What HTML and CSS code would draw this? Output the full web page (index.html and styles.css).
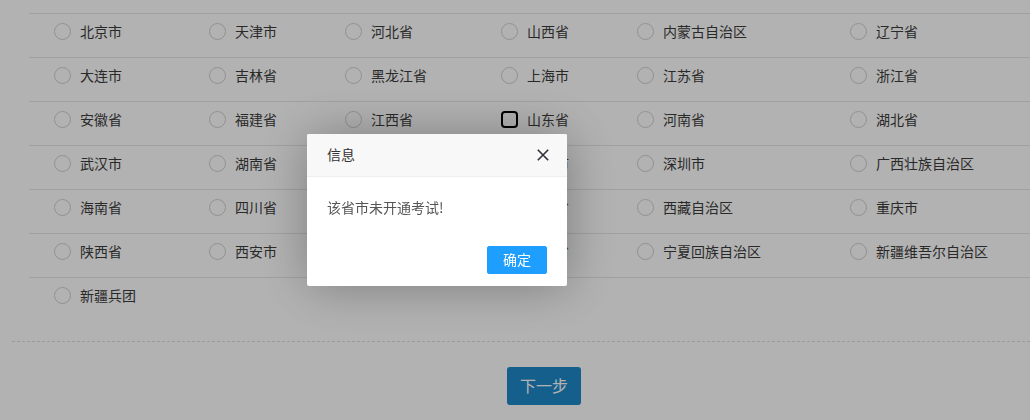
FILE: index.html
```html
<!DOCTYPE html>
<html lang="zh-CN">
<head>
<meta charset="utf-8">
<title>选择省市</title>
<link rel="stylesheet" href="styles.css">
</head>
<body>
<div class="page">
  <div class="grid">
    <div class="row">
      <label class="cell"><span class="radio"></span>北京市</label>
      <label class="cell"><span class="radio"></span>天津市</label>
      <label class="cell"><span class="radio"></span>河北省</label>
      <label class="cell"><span class="radio"></span>山西省</label>
      <label class="cell"><span class="radio"></span>内蒙古自治区</label>
      <label class="cell"><span class="radio"></span>辽宁省</label>
    </div>
    <div class="row">
      <label class="cell"><span class="radio"></span>大连市</label>
      <label class="cell"><span class="radio"></span>吉林省</label>
      <label class="cell"><span class="radio"></span>黑龙江省</label>
      <label class="cell"><span class="radio"></span>上海市</label>
      <label class="cell"><span class="radio"></span>江苏省</label>
      <label class="cell"><span class="radio"></span>浙江省</label>
    </div>
    <div class="row">
      <label class="cell"><span class="radio"></span>安徽省</label>
      <label class="cell"><span class="radio"></span>福建省</label>
      <label class="cell"><span class="radio"></span>江西省</label>
      <label class="cell"><span class="radio focused"></span>山东省</label>
      <label class="cell"><span class="radio"></span>河南省</label>
      <label class="cell"><span class="radio"></span>湖北省</label>
    </div>
    <div class="row">
      <label class="cell"><span class="radio"></span>武汉市</label>
      <label class="cell"><span class="radio"></span>湖南省</label>
      <label class="cell"><span class="radio"></span>广东省</label>
      <label class="cell"><span class="radio"></span>广州市</label>
      <label class="cell"><span class="radio"></span>深圳市</label>
      <label class="cell"><span class="radio"></span>广西壮族自治区</label>
    </div>
    <div class="row">
      <label class="cell"><span class="radio"></span>海南省</label>
      <label class="cell"><span class="radio"></span>四川省</label>
      <label class="cell"><span class="radio"></span></label>
      <label class="cell"><span class="radio"></span>云南省</label>
      <label class="cell"><span class="radio"></span>西藏自治区</label>
      <label class="cell"><span class="radio"></span>重庆市</label>
    </div>
    <div class="row">
      <label class="cell"><span class="radio"></span>陕西省</label>
      <label class="cell"><span class="radio"></span>西安市</label>
      <label class="cell"><span class="radio"></span>甘肃省</label>
      <label class="cell"><span class="radio"></span>青海省</label>
      <label class="cell"><span class="radio"></span>宁夏回族自治区</label>
      <label class="cell"><span class="radio"></span>新疆维吾尔自治区</label>
    </div>
    <div class="row">
      <label class="cell"><span class="radio"></span>新疆兵团</label>
    </div>
  </div>
  <div class="divider"></div>
  <div class="footer">
    <button class="next-btn" type="button">下一步</button>
  </div>
</div>

<div class="shade"></div>

<div class="dialog">
  <div class="dialog-title">
    <span>信息</span>
    <svg class="dialog-close" width="12" height="12" viewBox="0 0 12 12">
      <path d="M0.8 0.8 L11.2 11.2 M11.2 0.8 L0.8 11.2" stroke="#2f2f3a" stroke-width="1.6" fill="none"/>
    </svg>
  </div>
  <div class="dialog-content">该省市未开通考试!</div>
  <div class="dialog-btns">
    <a class="dialog-btn">确定</a>
  </div>
</div>
</body>
</html>
```
FILE: styles.css
```css
html, body {
  margin: 0;
  padding: 0;
  background: #fff;
}

body {
  font-family: "Microsoft YaHei", "Noto Sans CJK SC", "Noto Sans", sans-serif;
  font-size: 14px;
  color: #444;
  overflow: hidden;
}

.page {
  padding: 13px 0 0 12px;
}

.grid {
  margin-left: 17px;
  margin-bottom: 20px;
}

.row {
  display: grid;
  grid-template-columns: 155px 136px 156px 136px 213px 1fr;
  border-top: 1px solid #e6e6e6;
  height: 43px;
  box-sizing: content-box;
}

.cell {
  display: flex;
  align-items: center;
  height: 18px;
  margin-top: 8px;
  padding-left: 25px;
  line-height: 16px;
  padding-bottom: 2px;
  white-space: nowrap;
  color: #3c3c3c;
}

.radio {
  width: 15px;
  height: 15px;
  border: 1px solid #cfcfcf;
  border-radius: 50%;
  margin-right: 9px;
  flex: none;
  box-sizing: content-box;
  background: #fff;
  align-self: flex-start;
  margin-top: 1px;
}

.radio.focused {
  width: 13px;
  height: 13px;
  border: 2px solid #000;
  border-radius: 4px;
  background: #fff;
}

.divider {
  border-top: 1px dashed #dcdcdc;
}

.footer {
  padding: 25px 0 0 495px;
}

.next-btn {
  width: 74px;
  height: 38px;
  border: none;
  border-radius: 3px;
  background: #1f88cb;
  color: #fff;
  font-family: inherit;
  font-size: 16px;
  padding: 0 0 2px;
  line-height: 20px;
}

.shade {
  position: fixed;
  inset: 0;
  background: rgba(0, 0, 0, 0.3);
}

.dialog {
  position: fixed;
  left: 307px;
  top: 134px;
  width: 260px;
  background: #fff;
  border-radius: 2px;
  box-shadow: 1px 1px 50px rgba(0, 0, 0, 0.3);
}

.dialog-title {
  height: 40px;
  line-height: 40px;
  padding: 0 18px 2px 20px;
  background: #f8f8f8;
  border-bottom: 1px solid #eee;
  border-radius: 2px 2px 0 0;
  color: #333;
  font-size: 14px;
  display: flex;
  justify-content: space-between;
  align-items: center;
}

.dialog-close {
  display: block;
  margin-top: 1px;
}

.dialog-content {
  padding: 18px 20px 22px;
  line-height: 24px;
  font-size: 14px;
  color: #555;
}

.dialog-btns {
  text-align: right;
  padding: 0 15px 12px;
}

.dialog-btn {
  display: inline-block;
  height: 28px;
  line-height: 24px;
  margin: 5px 5px 0;
  padding: 0 15px 2px;
  border: 1px solid #1e9fff;
  background: #1e9fff;
  color: #fff;
  border-radius: 2px;
  font-size: 14px;
  box-sizing: border-box;
  width: 60px;
  text-align: center;
}
```
